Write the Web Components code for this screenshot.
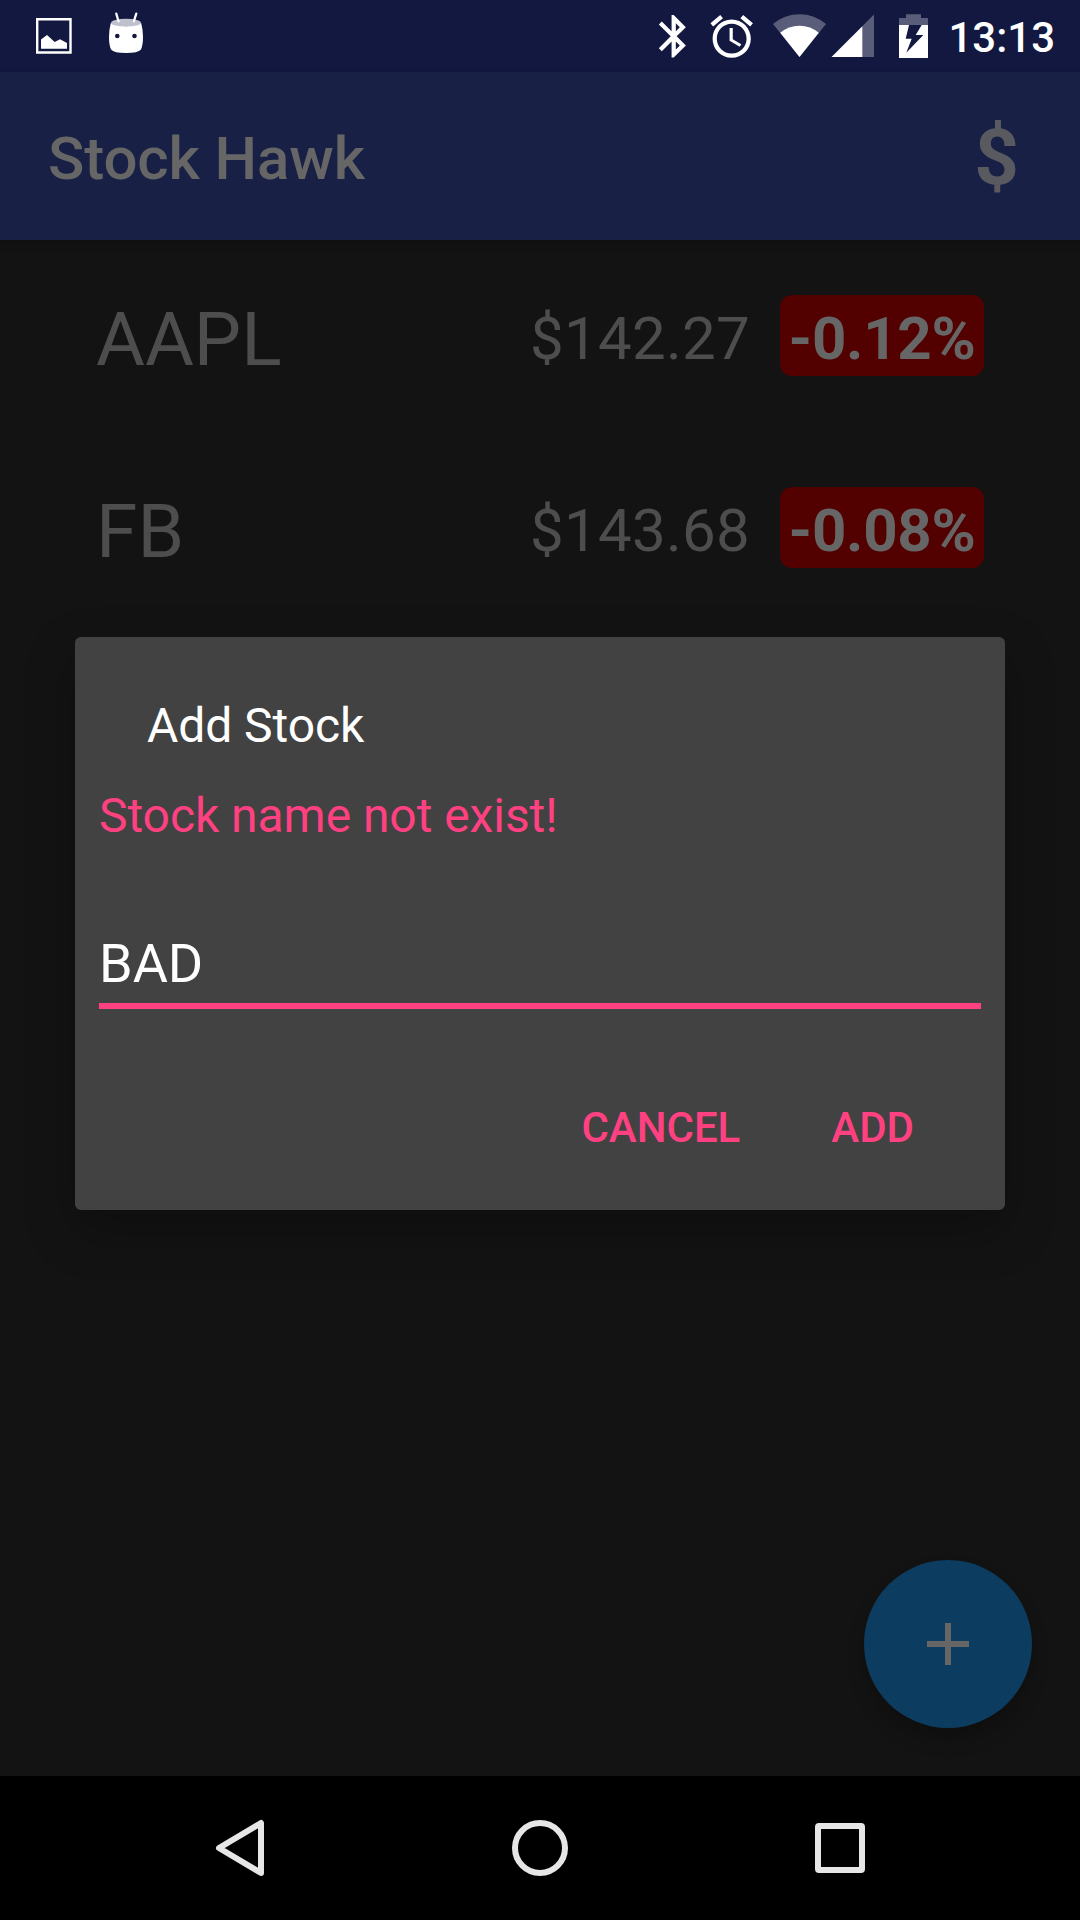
<!DOCTYPE html>
<html lang="en">
<head>
<meta charset="utf-8">
<title>Stock Hawk</title>
<style>
html,body{margin:0;padding:0;background:#131313}
body{font-family:Roboto,sans-serif}
</style>
</head>
<body>
<stock-app></stock-app>
<script>
const define = (name, html) => customElements.define(name, class extends HTMLElement {
  constructor() {
    super();
    const t = document.createElement('template');
    t.innerHTML = html;
    this.attachShadow({ mode: 'open' }).append(t.content.cloneNode(true));
  }
});

define('status-bar', `
<style>
:host{display:flex;height:72px;background:#131840;color:#fff;box-sizing:border-box;padding:0 25px 0 36px;justify-content:space-between}
div{display:flex}
svg{display:block;height:72px;fill:#fff}
.dim{fill:#5a5d79}
span{font-size:42px;font-weight:500;line-height:75px;margin-left:19px;white-space:nowrap}
</style>
<div style="gap:36px">
  <svg width="36" viewBox="36 0 36 72">
    <path d="M37.2 19.2h33.3v33.3H37.2z" fill="none" stroke="#fff" stroke-width="2.4"/>
    <path d="M41 39.5L47 35l7.7 7 5.3-2.7 7 3.7v5.7H41z"/>
  </svg>
  <svg width="36" viewBox="108 0 36 72">
    <path d="M110.8 23Q126 29.500 141.200 23Q143 30 143 37Q143 45 141 49.500Q138 53 126 53Q114 53 111 49.500Q109 45 109 37Q109 30 110.800 23Z"/>
    <ellipse cx="126" cy="22.700" rx="15" ry="3.900" fill="#bfc0ce"/>
    <path d="M116.300 13.700l2.200 7.500M136.300 13.700l-2.400 7.500" stroke="#fff" stroke-width="2.300" stroke-linecap="round"/>
    <circle cx="117.300" cy="36" r="2.300" fill="#131840"/><circle cx="134.500" cy="36" r="2.300" fill="#131840"/>
  </svg>
</div>
<div>
  <svg width="32" viewBox="656 0 32 72"><path transform="translate(648.200 10.800) scale(2.125)" d="M17.710 7.710L12 2h-1v7.590L6.410 5 5 6.410 10.590 12 5 17.590 6.410 19 11 14.410V22h1l5.710-5.710-4.300-4.290 4.300-4.290zM13 5.830l1.880 1.880L13 9.590V5.830zm1.880 10.460L13 18.170v-3.760l1.880 1.880z"/></svg>
  <svg width="44" viewBox="710 0 44 72" style="margin-left:22px"><path transform="translate(706.200 11) scale(2.125)" d="M22 5.720l-4.600-3.860-1.290 1.530 4.600 3.860L22 5.720zM7.880 3.390L6.600 1.860 2 5.710l1.290 1.530 4.590-3.850zM12.500 8H11v6l4.750 2.850.75-1.230-4-2.370V8zM12 4c-4.970 0-9 4.030-9 9s4.020 9 9 9c4.970 0 9-4.030 9-9s-4.030-9-9-9zm0 16c-3.870 0-7-3.130-7-7s3.130-7 7-7 7 3.130 7 7-3.130 7-7 7z"/></svg>
  <svg width="56" viewBox="772 0 56 72" style="margin-left:18px"><path class="dim" d="M799.500 57L773 24Q784.500 14.200 799.500 14.200T826 24Z"/><path d="M799.500 57L780.200 32.800Q788.500 25.700 799.500 25.700T818.800 32.800Z"/></svg>
  <svg width="44" viewBox="831 0 44 72" style="margin-left:3px"><path class="dim" d="M862 26.500L874 14.500V57H862z"/><path d="M831.500 57L862.300 26.200V57z"/></svg>
  <svg width="30" viewBox="899 0 30 72" style="margin-left:24px"><path class="dim" d="M906 14.200h15V18h7v7H899v-7h7z"/><path d="M899 25H928V58H899z"/><path fill="#131840" d="M909 25H921.700L915.700 35H923.300L906.300 52.700L911.700 38.700H905.700z"/></svg>
  <span>13:13</span>
</div>`);

define('app-bar', `
<style>
:host{display:flex;justify-content:space-between;height:168px;box-sizing:border-box;padding:0 61px 0 48px;background:#192045;color:#666;box-shadow:0 4px 9px rgba(0,0,0,.2);z-index:1}
h1{margin:0;font-size:60px;font-weight:500;line-height:173px;letter-spacing:-.1px}
span{font-size:78px;font-weight:700;line-height:172px;color:#595960}
</style>
<h1><slot></slot></h1><span>$</span>`);

define('stock-row', `
<style>
:host{display:flex;height:192px;box-sizing:border-box;padding:0 96px;color:#4d4d4d}
.symbol{flex:1;font-size:75px;line-height:199px}
.price{font-size:60px;line-height:197px;margin-right:30px;letter-spacing:.25px}
.change{box-sizing:border-box;width:204px;height:81px;margin-top:55px;padding-top:6px;border-radius:12px;background:#530000;color:#666;font-size:60px;font-weight:700;line-height:75px;letter-spacing:-.3px;text-align:center}
</style>
<div class="symbol"><slot name="symbol"></slot></div>
<div class="price"><slot name="price"></slot></div>
<div class="change"><slot name="change"></slot></div>`);

define('add-button', `
<style>
:host{display:flex;align-items:center;justify-content:center;width:168px;height:168px;border-radius:50%;background:#0c3c5f;box-shadow:0 12px 18px rgba(0,0,0,.22)}
svg{display:block}
</style>
<svg width="42" height="42"><path d="M18 0h6v18h18v6H24v18h-6V24H0v-6h18z" fill="#666"/></svg>`);

define('stock-dialog', `
<style>
:host{display:flex;flex-direction:column;width:930px;height:573px;box-sizing:border-box;padding:60px 24px 0;border-radius:6px;background:#424242;color:#fff;box-shadow:0 20px 50px rgba(0,0,0,.26)}
h2{margin:0 0 0 48px;font-size:48px;font-weight:400;line-height:57px;letter-spacing:-.06px}
.error{margin-top:33px;font-size:48px;line-height:57px;letter-spacing:-.06px;color:#ff4081}
.field{margin-top:88px;padding-bottom:8px;border-bottom:6px solid #ff4081;font-size:54px;line-height:63px}
.actions{display:flex;justify-content:flex-end;gap:91px;margin-top:94px;padding-right:67px;font-size:42px;font-weight:500;line-height:49px;color:#ff4081}
</style>
<h2>Add Stock</h2>
<div class="error">Stock name not exist!</div>
<div class="field">BAD</div>
<div class="actions"><span>CANCEL</span><span>ADD</span></div>`);

define('nav-bar', `
<style>
:host{display:flex;justify-content:space-between;align-items:center;height:144px;box-sizing:border-box;padding:0 210px;background:#000}
svg{display:block;fill:none;stroke:#e6e6e6;stroke-width:6;stroke-linejoin:round}
</style>
<svg width="60" height="60"><path d="M51 5V55L9 30Z"/></svg>
<svg width="60" height="60"><circle cx="30" cy="30" r="25"/></svg>
<svg width="60" height="60"><rect x="8" y="8" width="44" height="44" rx="1"/></svg>`);

define('stock-app', `
<style>
:host{display:flex;flex-direction:column;position:relative;width:1080px;height:1920px;overflow:hidden;background:#131313}
main{flex:1;display:flex;flex-direction:column}
add-button{margin:auto 48px 48px auto}
stock-dialog{position:absolute;left:75px;top:637px;z-index:2}
</style>
<status-bar></status-bar>
<app-bar>Stock Hawk</app-bar>
<main>
  <stock-row><span slot="symbol">AAPL</span><span slot="price">$142.27</span><span slot="change">-0.12%</span></stock-row>
  <stock-row><span slot="symbol">FB</span><span slot="price">$143.68</span><span slot="change">-0.08%</span></stock-row>
  <add-button></add-button>
</main>
<nav-bar></nav-bar>
<stock-dialog></stock-dialog>`);
</script>
</body>
</html>
